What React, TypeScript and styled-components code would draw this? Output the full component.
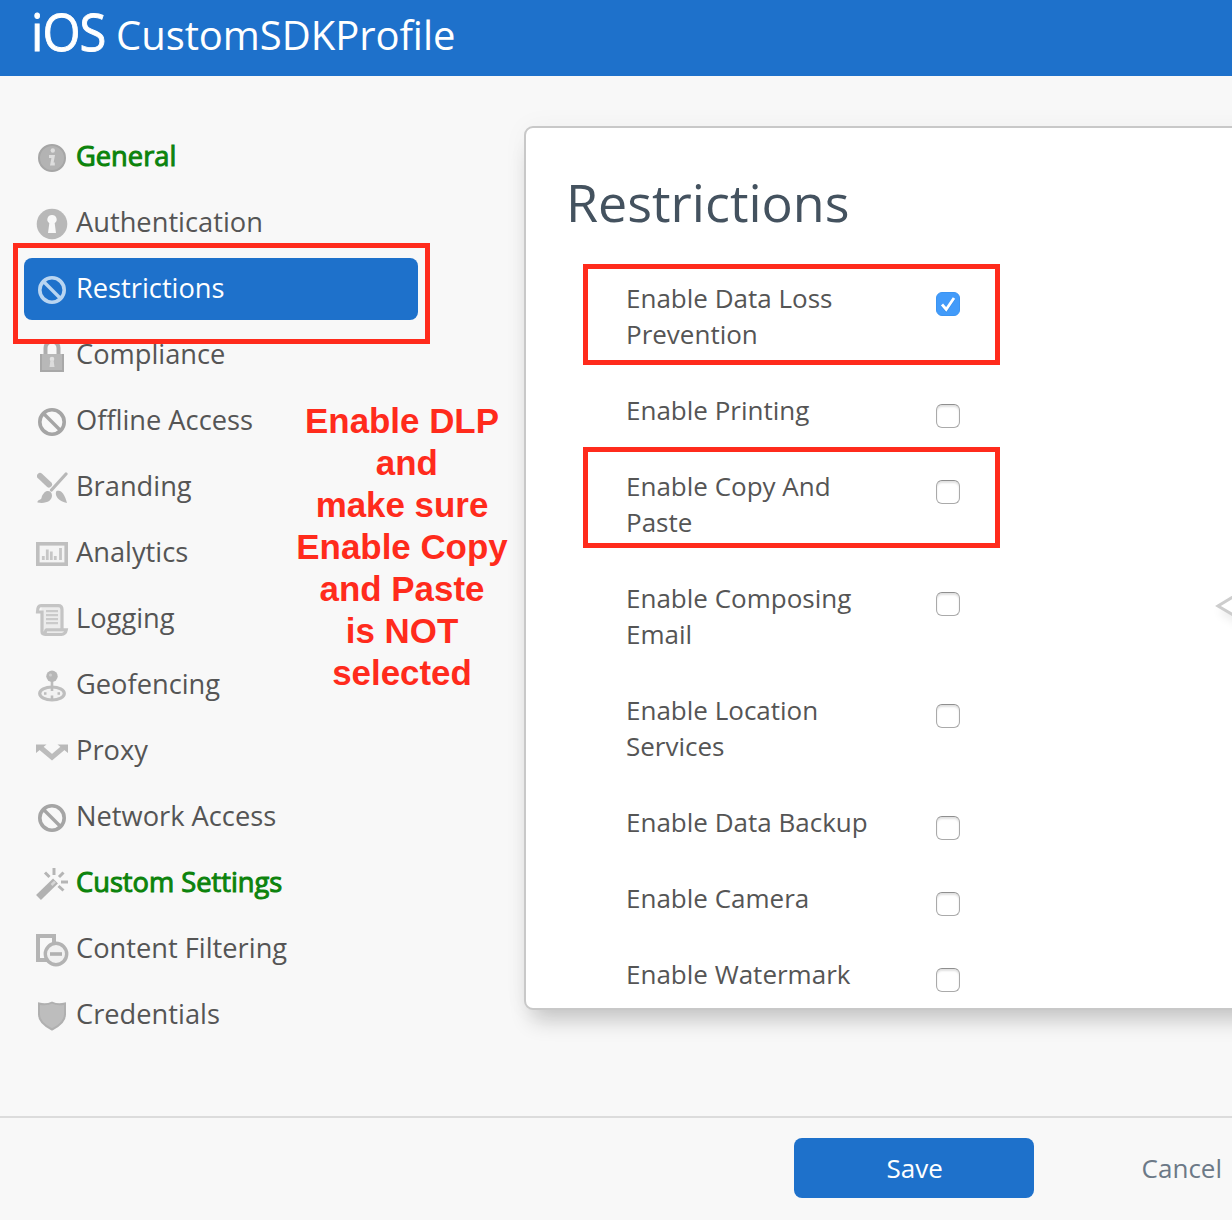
import React from "react";
import styled, { createGlobalStyle } from "styled-components";

const BLUE = "#1e71cb";
const RED = "#ff2b1c";

const Global = createGlobalStyle`
  * { box-sizing: border-box; }
  body { margin: 0; background: #f8f8f8; font-family: "Open Sans", "Noto Sans", sans-serif; }
`;

const Page = styled.div`
  display: flex;
  flex-direction: column;
  height: 1220px;
  overflow: hidden;
  background: #f8f8f8;
`;

const Header = styled.header`
  display: flex;
  align-items: flex-start;
  flex: 0 0 76px;
  height: 76px;
  padding-left: 30px;
  color: #fff;
  background: ${BLUE};
`;

const Platform = styled.span`
  width: 86px;
  font-size: 52px;
  line-height: 62px;
  font-weight: 400;
  letter-spacing: -1px;
  white-space: nowrap;
  -webkit-text-stroke: 0.9px #fff;
  transform: translateX(1px) scaleX(0.94);
  transform-origin: 0 50%;
`;

const ProfileName = styled.span`
  font-size: 40px;
  line-height: 70px;
  letter-spacing: -0.05px;
`;

const Body = styled.div`
  display: flex;
  flex: 1;
  min-height: 0;
  padding-top: 50px;
`;

const Sidebar = styled.nav`
  position: relative;
  display: flex;
  flex-direction: column;
  gap: 4px;
  flex: 0 0 524px;
  padding-left: 24px;
`;

const Item = styled.a<{ $active?: boolean; $done?: boolean }>`
  position: relative;
  display: flex;
  align-items: center;
  gap: 8px;
  width: 394px;
  height: 62px;
  padding-left: 12px;
  border-radius: 8px;
  font-size: 27.25px;
  color: ${(p) => (p.$active ? "#fff" : p.$done ? "#0c830c" : "#555")};
  background: ${(p) => (p.$active ? BLUE : "transparent")};
  -webkit-text-stroke: ${(p) => (p.$done ? "1px #0c830c" : "0")};
`;

const ItemText = styled.span`
  line-height: 38px;
  margin-top: -2px;
  white-space: nowrap;
`;

const IconSvg = styled.svg`
  width: 32px;
  height: 32px;
  margin-top: 2px;
  overflow: visible;
  filter: blur(0.6px);
  -webkit-text-stroke: 0;
`;

const Highlight = styled.div<{ $top: number; $left: number }>`
  position: absolute;
  z-index: 2;
  top: ${(p) => p.$top}px;
  left: ${(p) => p.$left}px;
  width: 417px;
  height: 101px;
  border: 5px solid ${RED};
  pointer-events: none;
`;

const Note = styled.div`
  position: absolute;
  top: 274px;
  left: 282px;
  width: 240px;
  font: bold 34.9px/42px "Liberation Sans", Arial, sans-serif;
  color: ${RED};
  text-align: center;
  white-space: pre;
`;

const Card = styled.main`
  position: relative;
  flex: 0 0 760px;
  height: 884px;
  padding: 38px 0 0 40px;
  border: 2px solid #c8c8c8;
  border-radius: 9px;
  background: #fff;
  box-shadow: 0 18px 22px -8px rgba(0, 0, 0, 0.2), 0 0 26px rgba(0, 0, 0, 0.04);
`;

const Title = styled.h1`
  margin: 0;
  height: 72px;
  font-size: 52px;
  line-height: 72px;
  font-weight: 400;
  letter-spacing: 0;
  color: #44525f;
`;

const Options = styled.div`
  display: flex;
  flex-direction: column;
  gap: 40px;
  padding: 42px 0 0 60px;
`;

const Option = styled.label`
  position: relative;
  display: flex;
  align-items: flex-start;
  font-size: 26px;
  line-height: 36px;
  color: #555;
`;

const OptionText = styled.span`
  width: 310px;
  padding-right: 60px;
`;

const Box = styled.span<{ $checked?: boolean }>`
  display: flex;
  width: 24px;
  height: 24px;
  margin-top: 12px;
  border-radius: 6px;
  border: ${(p) => (p.$checked ? "1px solid #3b94f2" : "1.5px solid #aaa")};
  border-top-color: ${(p) => (p.$checked ? "#3b94f2" : "#8f8f8f")};
  background: ${(p) => (p.$checked ? "#429bfa" : "#fff")};
  box-shadow: ${(p) => (p.$checked ? "none" : "inset 0 2px 2px rgba(0,0,0,.12)")};
`;

const Pointer = styled.svg`
  position: absolute;
  top: 450px;
  left: 688px;
  width: 40px;
  height: 60px;
`;

const PointerShadow = styled.path`
  filter: blur(5px);
`;

const Footer = styled.footer`
  display: flex;
  align-items: center;
  justify-content: flex-end;
  flex: 0 0 104px;
  gap: 108px;
  padding: 0 10px 2px 0;
  border-top: 2px solid #dcdcdc;
`;

const Save = styled.button`
  width: 240px;
  height: 60px;
  padding: 0 0 0 2px;
  border: 0;
  border-radius: 8px;
  font: 400 26px "Open Sans", sans-serif;
  color: #fff;
  background: ${BLUE};
`;

const Cancel = styled.a`
  font-size: 26px;
  color: #6c7987;
`;

type IconName =
  | "info" | "keyhole" | "ban" | "lock" | "brush" | "chart" | "scroll"
  | "joystick" | "split" | "wand" | "filter" | "shield";

const glyphs: Record<IconName, React.ReactNode> = {
  info: (
    <>
      <circle cx="16" cy="16" r="13" fill="#b3b3b3" stroke="#a6a6a6" strokeWidth="2" />
      <circle cx="16.8" cy="8.5" r="2.2" fill="#dedede" />
      <path d="M13 14.5h4.2l-1.4 7.500h3" fill="none" stroke="#dedede" strokeWidth="3" />
    </>
  ),
  keyhole: (
    <>
      <circle cx="16" cy="16" r="15.3" fill="#b8b8b8" />
      <path d="M16 7a4.500 4.500 0 0 0-2.700 8.200L12 25h8l-1.300-9.800A4.500 4.500 0 0 0 16 7z" fill="#f8f8f8" />
    </>
  ),
  ban: (
    <g fill="none" stroke="currentColor">
      <circle cx="16" cy="16" r="12.200" strokeWidth="3.600" />
      <path d="M8 8l16 16" strokeWidth="3.400" />
    </g>
  ),
  lock: (
    <>
      <path d="M9.500 14V8a6.500 6.500 0 0 1 13 0v6" fill="none" stroke="#adadad" strokeWidth="4" />
      <path d="M4 14h24v18H4z" fill="#b8b8b8" />
      <path d="M5 14v17h22V14" fill="none" stroke="#a8a8a8" strokeWidth="2" />
      <circle cx="16" cy="19" r="2.300" fill="#e2e2e2" />
      <path d="M14.500 20h3l1 7h-5z" fill="#dcdcdc" />
    </>
  ),
  brush: (
    <g fill="#b8b8b8" stroke="#b8b8b8">
      <path d="M4 4l9 8.500" strokeWidth="6" strokeLinecap="round" />
      <path d="M30 2L15.500 18" strokeWidth="3.200" strokeLinecap="round" />
      <path d="M8 21c3-3.500 8-2 8 2.500C16 29 10 32 1.500 30.500 1 28 5 28 5.500 26c.4-2 1-3.500 2.500-5z" stroke="none" />
      <path d="M20.500 19c3-1 5 .2 6.500 2.500 2 3 3 6 4 9.500-4-1-7-2-9-4.500-1.700-2-3-5-1.500-7.500z" stroke="none" />
    </g>
  ),
  chart: (
    <>
      <rect x="1.800" y="5.800" width="28.400" height="20.400" fill="#f4f4f4" stroke="#bfbfbf" strokeWidth="3.600" />
      <path d="M7.300 22v-4M11.300 22V11.500M15.300 22v-8.500M19.300 22v-4M24.500 22V10" stroke="#c6c6c6" strokeWidth="2.800" />
    </>
  ),
  scroll: (
    <>
      <path d="M5.500 2h20v24h-20z" fill="#ececec" />
      <path d="M26 25V5.500Q26 1.700 22.500 1.700H5Q1.500 1.700 1.500 8H6V27.500Q6 30.300 9 30.300H25.500Q29.500 30.300 30.300 25.800H10.500Q9.500 26 9 29.500" fill="none" stroke="#c4c4c4" strokeWidth="3.200" />
      <path d="M10 7.200h12M10 11.200h12M10 15.200h12M10 19.200h12" stroke="#cacaca" strokeWidth="2.200" />
    </>
  ),
  joystick: (
    <>
      <ellipse cx="16" cy="23.500" rx="12.300" ry="6.500" fill="#f2f2f2" stroke="#bebebe" strokeWidth="3.200" />
      <path d="M16 10v11M8 23.500h2.500M21.500 23.500H24M16 25.500v4" stroke="#bcbcbc" strokeWidth="2.600" />
      <circle cx="16" cy="6.200" r="5.700" fill="#b7b7b7" />
      <circle cx="14.500" cy="5" r="1.600" fill="#cfcfcf" />
    </>
  ),
  split: (
    <>
      <path d="M4.500 11.500L16 21.200l11.500-9.700" fill="none" stroke="#bcbcbc" strokeWidth="5" />
      <path d="M0 8.500h10.500L0 17zM32 8.500H21.500L32 17z" fill="#b9b9b9" />
    </>
  ),
  wand: (
    <g fill="none">
      <path d="M2.500 29.500L19.500 13" stroke="#b2b2b2" strokeWidth="7" />
      <path d="M15.500 17l3.500-3.400" stroke="#d6d6d6" strokeWidth="2.600" />
      <path d="M18 0v7M9 4.500l4.500 4.500M27.500 4.500L23 9M25 14h7M22.500 18l5 4.500" stroke="#b5b5b5" strokeWidth="3" />
    </g>
  ),
  filter: (
    <>
      <rect x="2" y="2" width="16" height="24" fill="#f8f8f8" stroke="#b5b5b5" strokeWidth="4" />
      <circle cx="20" cy="20" r="10.700" fill="#f1f1f1" stroke="#b3b3b3" strokeWidth="3.400" />
      <path d="M14 20h12" stroke="#b0b0b0" strokeWidth="3.600" />
    </>
  ),
  shield: (
    <path
      d="M3 3.500c5 1.500 9 1 13-.8 4 1.800 8 2.300 13 .8v11C29 21 22 26.500 16 29.500 10 26.500 3 21 3 14.500z"
      fill="#bdbdbd" stroke="#b0b0b0" strokeWidth="2"
    />
  ),
};

function Icon({ name, color }: { name: IconName; color: string }) {
  return (
    <IconSvg viewBox="0 0 32 32" color={color} aria-hidden="true">
      {glyphs[name]}
    </IconSvg>
  );
}

const items: { label: string; icon: IconName; active?: boolean; done?: boolean }[] = [
  { label: "General", icon: "info", done: true },
  { label: "Authentication", icon: "keyhole" },
  { label: "Restrictions", icon: "ban", active: true },
  { label: "Compliance", icon: "lock" },
  { label: "Offline Access", icon: "ban" },
  { label: "Branding", icon: "brush" },
  { label: "Analytics", icon: "chart" },
  { label: "Logging", icon: "scroll" },
  { label: "Geofencing", icon: "joystick" },
  { label: "Proxy", icon: "split" },
  { label: "Network Access", icon: "ban" },
  { label: "Custom Settings", icon: "wand", done: true },
  { label: "Content Filtering", icon: "filter" },
  { label: "Credentials", icon: "shield" },
];

const options: { label: string; checked?: boolean; highlight?: number }[] = [
  { label: "Enable Data Loss Prevention", checked: true, highlight: -16 },
  { label: "Enable Printing" },
  { label: "Enable Copy And Paste", highlight: -21 },
  { label: "Enable Composing Email" },
  { label: "Enable Location Services" },
  { label: "Enable Data Backup" },
  { label: "Enable Camera" },
  { label: "Enable Watermark" },
];

export default function App() {
  return (
    <>
      <Global />
      <Page>
        <Header>
          <Platform>iOS</Platform>
          <ProfileName>CustomSDKProfile</ProfileName>
        </Header>
        <Body>
          <Sidebar>
            {items.map((it) => (
              <Item key={it.label} $active={it.active} $done={it.done}>
                <Icon name={it.icon} color={it.active ? "#b9d5f1" : "#a5a5a5"} />
                <ItemText>{it.label}</ItemText>
                {it.active && <Highlight $top={-15} $left={-11} />}
              </Item>
            ))}
            <Note>{"Enable DLP\n and\nmake sure\nEnable Copy\nand Paste\nis NOT\nselected"}</Note>
          </Sidebar>
          <Card>
            <Title>Restrictions</Title>
            <Options>
              {options.map((o) => (
                <Option key={o.label}>
                  <OptionText>{o.label}</OptionText>
                  <Box $checked={o.checked}>
                    {o.checked && (
                      <svg width="22" height="22" viewBox="0 0 22 22">
                        <path d="M5 12.500l4.200 5L17 6" fill="none" stroke="#2b7fd8" strokeOpacity=".5" strokeWidth="2.800" />
                        <path d="M5 11.500l4.200 5L17 5" fill="none" stroke="#fff" strokeWidth="2.800" />
                      </svg>
                    )}
                  </Box>
                  {o.highlight !== undefined && <Highlight $top={o.highlight} $left={-43} />}
                </Option>
              ))}
            </Options>
            <Pointer viewBox="0 0 40 60">
              <PointerShadow d="M40 10L4 34l36 23z" fill="#000" opacity="0.07" />
              <path d="M40 6L4 28l36 21" fill="#fff" stroke="#cdcdcd" strokeWidth="3" />
            </Pointer>
          </Card>
        </Body>
        <Footer>
          <Save>Save</Save>
          <Cancel>Cancel</Cancel>
        </Footer>
      </Page>
    </>
  );
}
